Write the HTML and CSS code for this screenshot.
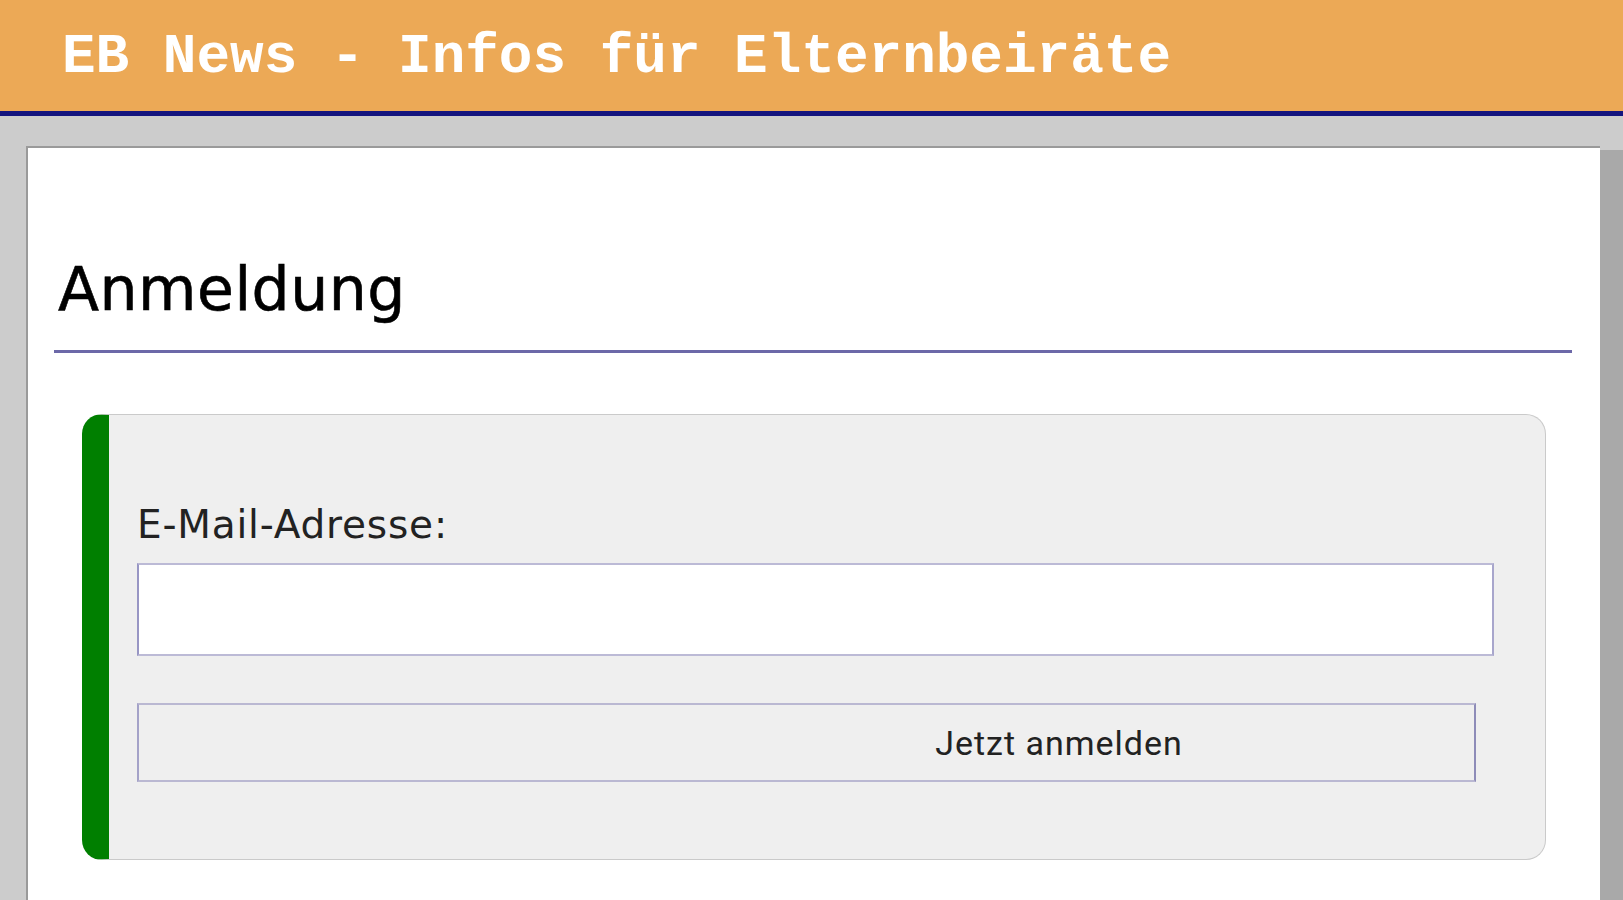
FILE: index.html
```html
<!DOCTYPE html>
<html lang="de">
<head>
<meta charset="utf-8">
<title>EB News - Anmeldung</title>
<link rel="stylesheet" href="styles.css">
</head>
<body>
<header class="site-header">EB News - Infos für Elternbeiräte</header>
<main class="outer">
  <div class="page">
    <h1 class="title">Anmeldung</h1>
    <form class="card">
      <label class="label" for="email">E-Mail-Adresse:</label>
      <input class="input" id="email" type="email">
      <button class="button" type="button">Jetzt anmelden</button>
    </form>
  </div>
</main>
</body>
</html>
```

FILE: styles.css
```css
html, body {
  margin: 0;
  padding: 0;
}
body {
  background: #cccccc;
  height: 900px;
  overflow: hidden;
}
.site-header {
  box-sizing: border-box;
  height: 116px;
  background: #eca956;
  border-bottom: 5px solid #14147e;
  padding: 29px 0 0 62px;
  font-family: "Liberation Mono", "DejaVu Sans Mono", monospace;
  font-weight: bold;
  font-size: 56px;
  line-height: 56px;
  color: #ffffff;
  white-space: pre;
}
.outer {
  padding: 30px 23px 0 26px;
}
.page {
  box-sizing: border-box;
  background: #ffffff;
  border-top: 2px solid #9a9a9a;
  border-left: 2px solid #9a9a9a;
  box-shadow: 23px 4px 0 #a9a9a9;
  height: 754px;
  padding: 0 28px 0 26px;
}
.title {
  margin: 0;
  padding: 106px 0 26px 4px;
  border-bottom: 3px solid #6c68a8;
  font-family: "DejaVu Sans", Verdana, sans-serif;
  font-weight: normal;
  font-size: 60px;
  line-height: 70px;
  letter-spacing: 0.5px;
  -webkit-text-stroke: 0.6px #000000;
  color: #000000;
}
.card {
  display: flex;
  flex-direction: column;
  align-items: stretch;
  margin: 61px 26px 0 28px;
  background: #efefef;
  border: 1px solid #cacaca;
  border-left: 27px solid #007f00;
  border-radius: 20px;
  padding: 88px 51px 77px 28px;
}
.label {
  font-family: "DejaVu Sans", Verdana, sans-serif;
  font-size: 39px;
  line-height: 44px;
  letter-spacing: 0.8px;
  color: #222222;
}
.input {
  box-sizing: border-box;
  margin: 16px 0 0 0;
  height: 93px;
  background: #ffffff;
  border: 2px solid #bcbad6;
  border-left-color: #9896c4;
  border-right-color: #a8a6cc;
  padding: 0;
  outline: none;
}
.button {
  box-sizing: border-box;
  margin: 47px 18px 0 0;
  height: 79px;
  background: #efefef;
  border: 2px solid #bab8d2;
  border-left-color: #a4a2c8;
  border-right-color: #8e8cb8;
  padding: 0 0 0 505px;
  text-align: center;
  font-family: Roboto, "Liberation Sans", sans-serif;
  font-size: 34px;
  letter-spacing: 1px;
  color: #222222;
}
```
